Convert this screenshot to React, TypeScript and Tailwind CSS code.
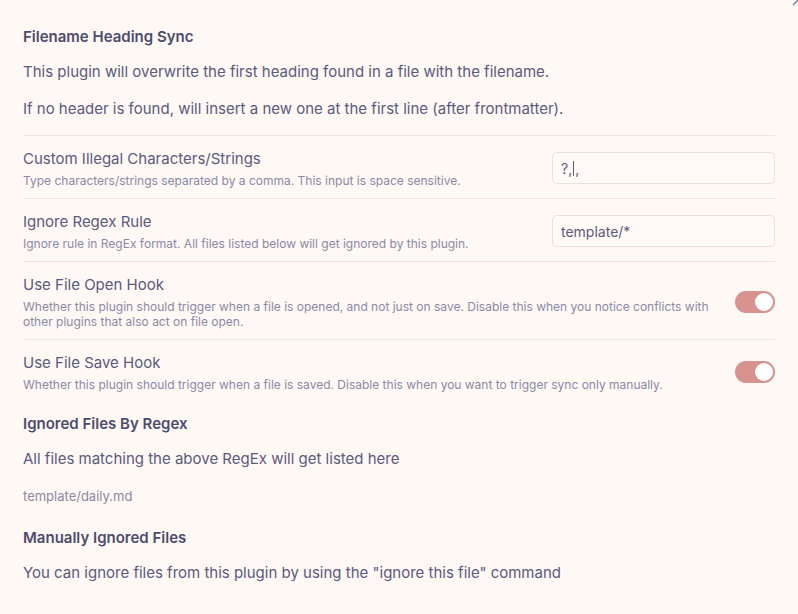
import React from "react";

function Toggle() {
  return (
    <div className="flex h-[22px] w-[40px] shrink-0 items-center justify-end rounded-full bg-[#d9938f] pr-[2px]">
      <div className="h-[18px] w-[18px] rounded-full bg-white" />
    </div>
  );
}

function TextInput({ value }: { value: React.ReactNode }) {
  return (
    <div className="flex h-[32px] w-[223px] shrink-0 items-center rounded-[5px] border border-[#e7e2dd] bg-[#fffaf5] px-[8px] text-[14px] text-[#5b5a80]">
      {value}
    </div>
  );
}

function Row({
  name,
  desc,
  control,
}: {
  name: string;
  desc: React.ReactNode;
  control: React.ReactNode;
}) {
  return (
    <div className="flex items-center border-t border-[#e9e4df] pb-[10px] pt-[12px]">
      <div className="mr-[22px] min-w-0 flex-1">
        <div className="text-[15px] leading-[22px] text-[#5b5a80]">{name}</div>
        <div className="pt-[3px] text-[12px] leading-[15px] text-[#8b89a7]">{desc}</div>
      </div>
      {control}
    </div>
  );
}

export default function App() {
  return (
    <div className="relative min-h-[614px] w-full bg-[#fef9f4] font-['Inter',sans-serif]">
      <svg className="absolute right-0 top-0" width="6" height="6" viewBox="0 0 6 6">
        <line x1="1" y1="5" x2="6" y2="0" stroke="#6d78b8" strokeWidth="1.3" />
      </svg>
      <div className="px-[23px] pt-[26px]">
        <div className="text-[15px] font-semibold leading-[22px] text-[#4d4c6f]">Filename Heading Sync</div>
        <p className="mt-[12.5px] text-[15px] leading-[22px] text-[#5b5a80]">
          This plugin will overwrite the first heading found in a file with the filename.
        </p>
        <p className="mt-[15.5px] text-[15px] leading-[22px] text-[#5b5a80]">
          If no header is found, will insert a new one at the first line (after frontmatter).
        </p>
        <div className="mt-[15px]">
          <Row
            name="Custom Illegal Characters/Strings"
            desc="Type characters/strings separated by a comma. This input is space sensitive."
            control={
              <TextInput
                value={
                  <span>
                    ?,<span className="mx-[1px] inline-block h-[15px] w-px translate-y-[2px] bg-[#5b5a80]" />,
                  </span>
                }
              />
            }
          />
          <Row
            name="Ignore Regex Rule"
            desc="Ignore rule in RegEx format. All files listed below will get ignored by this plugin."
            control={<TextInput value="template/*" />}
          />
          <Row
            name="Use File Open Hook"
            desc="Whether this plugin should trigger when a file is opened, and not just on save. Disable this when you notice conflicts with other plugins that also act on file open."
            control={<Toggle />}
          />
          <Row
            name="Use File Save Hook"
            desc="Whether this plugin should trigger when a file is saved. Disable this when you want to trigger sync only manually."
            control={<Toggle />}
          />
        </div>
        <div className="mt-[11px] text-[15px] font-semibold leading-[22px] text-[#4d4c6f]">Ignored Files By Regex</div>
        <p className="mt-[13px] text-[15px] leading-[22px] text-[#5b5a80]">
          All files matching the above RegEx will get listed here
        </p>
        <div className="mt-[17px] text-[13px] leading-[18px] text-[#8a88a3]">template/daily.md</div>
        <div className="mt-[22px] text-[15px] font-semibold leading-[22px] text-[#4d4c6f]">Manually Ignored Files</div>
        <p className="mt-[13px] text-[15px] leading-[22px] text-[#5b5a80]">
          You can ignore files from this plugin by using the "ignore this file" command
        </p>
      </div>
    </div>
  );
}
